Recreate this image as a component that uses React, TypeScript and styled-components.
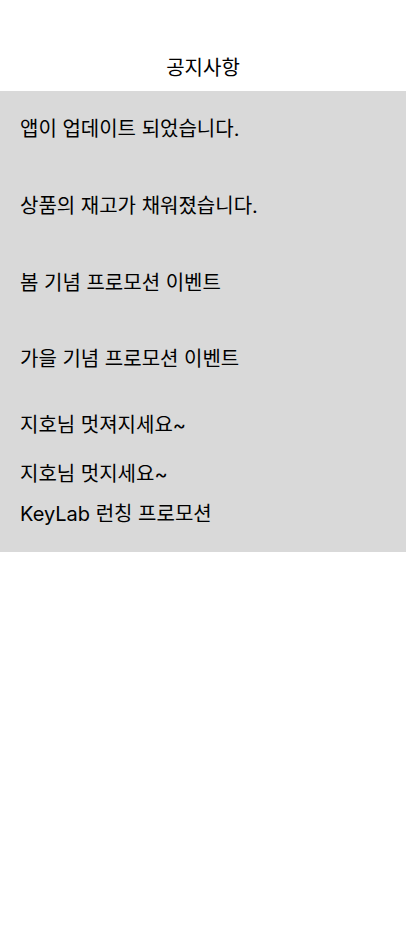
import { createGlobalStyle, styled } from 'styled-components';

const GlobalStyle = createGlobalStyle`
  body {
    margin: 0;
    background: #fff;
    font-family: Inter, "Noto Sans CJK KR", sans-serif;
    color: #000;
  }
`;

const notices = [
  { id: 1, title: '앱이 업데이트 되었습니다.', gap: 53 },
  { id: 2, title: '상품의 재고가 채워졌습니다.', gap: 53 },
  { id: 3, title: '봄 기념 프로모션 이벤트', gap: 52 },
  { id: 4, title: '가을 기념 프로모션 이벤트', gap: 42 },
  { id: 5, title: '지호님 멋져지세요~', gap: 25 },
  { id: 6, title: '지호님 멋지세요~', gap: 16 },
  { id: 7, title: 'KeyLab 런칭 프로모션', gap: 0 },
];

const App = () => {
  return (
    <>
      <GlobalStyle />
      <Page>
        <Header>
          <Title>공지사항</Title>
        </Header>
        <NoticeList>
          {notices.map((notice) => (
            <NoticeItem key={notice.id} $gap={notice.gap}>
              {notice.title}
            </NoticeItem>
          ))}
        </NoticeList>
      </Page>
    </>
  );
};

export default App;

const Page = styled.div`
  width: 100%;
  min-height: 925px;
  display: flex;
  flex-direction: column;
`;

const Header = styled.header`
  display: flex;
  justify-content: center;
  padding: 56px 0 11px;
`;

const Title = styled.h1`
  margin: 0;
  font-size: 20px;
  font-weight: 400;
  line-height: 24px;
`;

const NoticeList = styled.ul`
  list-style: none;
  margin: 0;
  padding: 26px 20px 26px;
  background: #d9d9d9;
  display: flex;
  flex-direction: column;
`;

const NoticeItem = styled.li<{ $gap: number }>`
  font-size: 20px;
  line-height: 24px;
  margin-bottom: ${({ $gap }) => $gap}px;
`;
